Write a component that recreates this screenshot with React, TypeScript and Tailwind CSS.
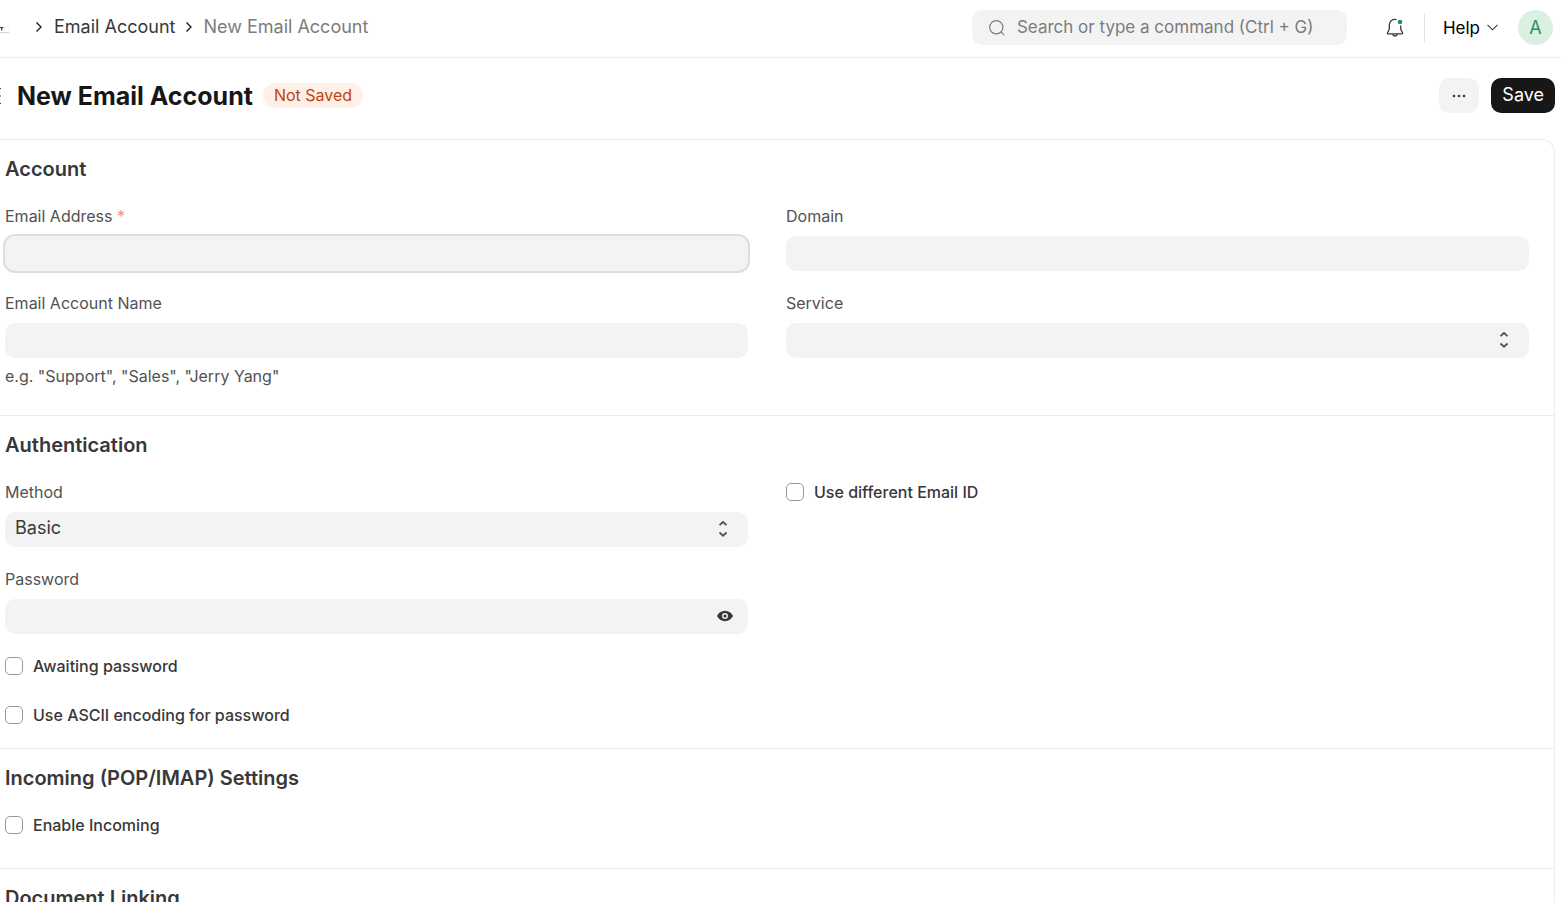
import { ReactNode } from "react";

const INPUT = "block h-[35px] w-full rounded-[10px] bg-[#f3f3f3] px-[10px] text-[18px] text-[#383838] outline-none";

function Chevron() {
  return (
    <svg width="8" height="12" viewBox="0 0 8 12" fill="none" stroke="#171717" strokeWidth="1.3">
      <path d="M1.5 1.5 6 6 1.5 10.5" />
    </svg>
  );
}

function SearchIcon() {
  return (
    <svg width="18" height="18" viewBox="0 0 18 18" fill="none" stroke="#7c7c7c" strokeWidth="1.2" strokeLinecap="round">
      <circle cx="8.3" cy="8.3" r="6.6" />
      <path d="m13 13 2.900 2.900" />
    </svg>
  );
}

function BellIcon() {
  return (
    <svg width="20" height="20" viewBox="0 0 20 20" fill="none" stroke="#383838" strokeWidth="1.3" strokeLinejoin="round">
      <path d="M11.500 1.700C7.600.5 4.400 3 4.300 7v3.300c0 .8-.2 1.500-.6 2.200l-1.200 2.200c-.3.6 0 1.200.7 1.200h13.600c.7 0 1-.6.7-1.200l-1.200-2.200c-.4-.7-.6-1.400-.6-2.200V7.600" />
      <path d="M7.600 16.200c.4 2.400 4.400 2.400 4.800 0" />
      <circle cx="15" cy="4" r="2.300" fill="#278f5e" stroke="none" />
    </svg>
  );
}

function SelectIcon() {
  return (
    <svg
      className="pointer-events-none absolute right-5 top-2"
      width="10" height="17" viewBox="0 0 10 17" fill="none" stroke="#525252" strokeWidth="1.8"
    >
      <path d="M1.500 5.200 5 2l3.500 3.200M1.500 12.500 5 15.700l3.500-3.200" />
    </svg>
  );
}

function EyeIcon() {
  return (
    <svg width="16" height="12" viewBox="0 0 16 12">
      <path fill="#383838" fillRule="evenodd" d="M8 .8C4.400.8 1.400 2.900 0 6c1.400 3.100 4.400 5.200 8 5.200s6.600-2.100 8-5.200C14.600 2.900 11.600.8 8 .8Zm0 8.200a3 3 0 1 1 0-6 3 3 0 0 1 0 6Z" />
      <circle cx="8" cy="6" r="1.600" fill="#383838" />
    </svg>
  );
}

function Field({ id, label, required, help, children }: {
  id: string;
  label: string;
  required?: boolean;
  help?: string;
  children: ReactNode;
}) {
  return (
    <div>
      <label htmlFor={id} className="mb-[10px] block text-[16px] leading-5 text-[#525252]">
        {label}
        {required && <span className="text-[#f08c8c]"> *</span>}
      </label>
      <div className="relative">{children}</div>
      {help && <p className="mt-2 text-[16px] leading-5 text-[#525252]">{help}</p>}
    </div>
  );
}

function Check({ label }: { label: string }) {
  return (
    <label className="flex items-center gap-[10px] self-start text-[16px] font-medium leading-5 text-[#383838]">
      <input type="checkbox" className="h-[18px] w-[18px] appearance-none rounded-[5px] border border-[#999999] bg-white checked:bg-[#171717]" />
      {label}
    </label>
  );
}

function Section({ title, className, children }: { title: string; className?: string; children?: ReactNode }) {
  return (
    <section className={`border-b border-[#ededed] pl-[5px] pr-[25px] pt-[15px] ${className ?? ""}`}>
      <h2 className="mb-[23px] text-[20px] font-semibold leading-7 text-[#383838]">{title}</h2>
      <div className="grid grid-cols-2 gap-x-[38px]">{children}</div>
    </section>
  );
}

export default function App() {
  return (
    <div className="h-screen overflow-hidden bg-white font-['Inter',sans-serif] text-[#171717]">
      <header className="flex h-[58px] items-center justify-between border-b border-[#ededed] pb-[2px] pr-2">
        <nav aria-label="Breadcrumb" className="flex items-center pb-[2px] text-[18px] leading-6">
          <a href="#" aria-label="Home" className="mr-[25px]">
            <svg width="10" height="12" viewBox="0 0 10 12">
              <path d="M0 6.500h3.500M1.700 6.500v3" stroke="#383838" strokeWidth="1.200" />
              <path d="M7 5.500h2" stroke="#dff3fa" strokeWidth="2" />
              <path d="M0 11.500h9" stroke="#d4d4d4" />
            </svg>
          </a>
          <Chevron />
          <a href="#" className="ml-[11px] mr-[10px] text-[#383838]">Email Account</a>
          <Chevron />
          <span className="ml-[10px] text-[#7c7c7c]">New Email Account</span>
        </nav>
        <div className="flex items-center">
          <label className="mr-[38px] flex h-[35px] w-[375px] items-center gap-[11px] rounded-[10px] bg-[#f3f3f3] pl-4">
            <SearchIcon />
            <input
              type="text"
              aria-label="Search"
              placeholder="Search or type a command (Ctrl + G)"
              className="min-w-0 flex-1 bg-transparent text-[17px] outline-none placeholder:text-[#7c7c7c]"
            />
          </label>
          <button aria-label="Notifications" className="mr-[19px]"><BellIcon /></button>
          <div className="h-[30px] w-px bg-[#e2e2e2]" />
          <button className="ml-[18px] flex items-center gap-[7px] text-[17px] leading-6 text-black">
            Help
            <svg width="11" height="7" viewBox="0 0 11 7" fill="none" stroke="#383838" strokeWidth="1.100">
              <path d="m.5.800 5 5 5-5" />
            </svg>
          </button>
          <button aria-label="User menu" className="ml-5 h-[35px] w-[35px] rounded-full bg-[#daf0e1] text-[18px] text-[#278f5e]">A</button>
        </div>
      </header>

      <div className="flex h-[81px] items-center justify-between pb-[6px] pr-[6px]">
        <div className="flex items-center">
          <button aria-label="Toggle sidebar" className="mr-4">
            <svg width="1" height="18" viewBox="0 0 1 18" stroke="#383838" strokeWidth="1.200">
              <path d="M0 1.500h1M0 9h1M0 16.500h1" />
            </svg>
          </button>
          <h1 className="text-[25px] font-bold leading-8">New Email Account</h1>
          <span className="ml-[10px] rounded-full bg-[#fff0e7] px-[11px] text-[16px] leading-[25px] text-[#c0420f]">Not Saved</span>
        </div>
        <div className="flex gap-3">
          <button aria-label="More actions" className="flex h-[35px] w-10 items-center justify-center rounded-[10px] bg-[#f3f3f3]">
            <svg width="14" height="4" viewBox="0 0 14 4" fill="#383838">
              <circle cx="2" cy="2" r="1.300" />
              <circle cx="7" cy="2" r="1.300" />
              <circle cx="12" cy="2" r="1.300" />
            </svg>
          </button>
          <button className="h-[35px] rounded-[10px] bg-[#171717] px-[11px] pb-[2px] text-[18px] leading-6 text-white">Save</button>
        </div>
      </div>

      <form className="mr-[6px] rounded-tr-[14px] border-r border-t border-[#ededed]">
        <Section title="Account" className="pb-[29px]">
          <div className="flex flex-col gap-[22px]">
            <Field id="email" label="Email Address" required>
              <input id="email" type="email" className={`${INPUT} ring-2 ring-[#dedede]`} />
            </Field>
            <Field id="account-name" label="Email Account Name" help={'e.g. "Support", "Sales", "Jerry Yang"'}>
              <input id="account-name" type="text" className={INPUT} />
            </Field>
          </div>
          <div className="flex flex-col gap-[22px]">
            <Field id="domain" label="Domain">
              <input id="domain" type="text" className={INPUT} />
            </Field>
            <Field id="service" label="Service">
              <select id="service" className={`${INPUT} appearance-none`}>
                <option></option>
              </select>
              <SelectIcon />
            </Field>
          </div>
        </Section>

        <Section title="Authentication" className="pb-[23px]">
          <div className="flex flex-col gap-[22px]">
            <Field id="method" label="Method">
              <select id="method" className={`${INPUT} appearance-none pb-1`}>
                <option>Basic</option>
                <option>OAuth</option>
              </select>
              <SelectIcon />
            </Field>
            <Field id="password" label="Password">
              <input id="password" type="password" className={INPUT} />
              <button type="button" aria-label="Show password" className="absolute right-[15px] top-[11px]">
                <EyeIcon />
              </button>
            </Field>
            <div className="flex flex-col gap-[29px]">
              <Check label="Awaiting password" />
              <Check label="Use ASCII encoding for password" />
            </div>
          </div>
          <div className="flex flex-col">
            <Check label="Use different Email ID" />
          </div>
        </Section>

        <Section title="Incoming (POP/IMAP) Settings" className="pb-[33px]">
          <Check label="Enable Incoming" />
        </Section>

        <Section title="Document Linking" />
      </form>
    </div>
  );
}
